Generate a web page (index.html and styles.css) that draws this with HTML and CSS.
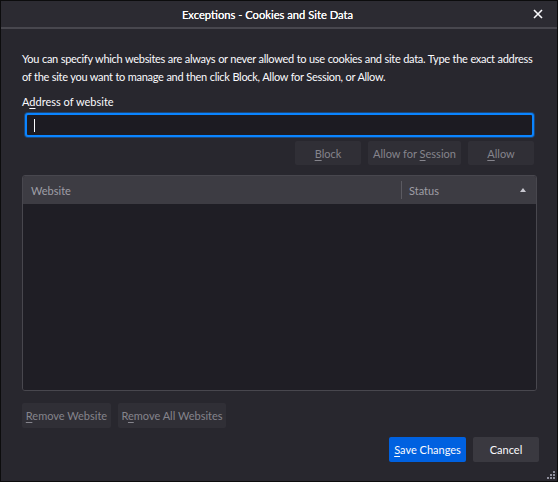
FILE: index.html
```html
<!DOCTYPE html>
<html lang="en">
<head>
  <meta charset="UTF-8">
  <meta name="viewport" content="width=device-width, initial-scale=1.0">
  <title>Exceptions - Cookies and Site Data</title>
  <link rel="stylesheet" href="styles.css">
</head>
<body>
  <div class="window">
    <div class="titlebar">
      <span class="title">Exceptions - Cookies and Site Data</span>
      <span class="close">
        <svg width="10" height="10" viewBox="0 0 10 10"><path d="M1 1L9 9M9 1L1 9" stroke="#fbfbfe" stroke-width="1.6"/></svg>
      </span>
    </div>

    <div class="content">
      <p class="intro">You can specify which websites are always or never allowed to use cookies and site data. Type the exact address of the site you want to manage and then click Block, Allow for Session, or Allow.</p>

      <label class="field-label">A<u>d</u>dress of website</label>
      <div class="address-input"><span class="caret"></span></div>

      <div class="action-row">
        <button class="btn" disabled><u>B</u>lock</button>
        <button class="btn" disabled>Allow for <u>S</u>ession</button>
        <button class="btn btn-allow" disabled><u>A</u>llow</button>
      </div>

      <div class="site-table">
        <div class="table-head">
          <div class="col col-site">Website</div>
          <div class="col col-status">Status <span class="sort-arrow"></span></div>
        </div>
        <div class="table-body"></div>
      </div>

      <div class="remove-row">
        <button class="btn" disabled><u>R</u>emove Website</button>
        <button class="btn" disabled>R<u>e</u>move All Websites</button>
      </div>

      <div class="footer">
        <button class="btn btn-primary"><u>S</u>ave Changes</button>
        <button class="btn btn-cancel">Cancel</button>
      </div>
    </div>

    <svg class="grip" width="8" height="8" viewBox="0 0 8 8">
      <rect x="6" y="0" width="2" height="2" fill="#8f8f9d"/>
      <rect x="3" y="3" width="2" height="2" fill="#8f8f9d"/>
      <rect x="6" y="3" width="2" height="2" fill="#8f8f9d"/>
      <rect x="0" y="6" width="2" height="2" fill="#8f8f9d"/>
      <rect x="3" y="6" width="2" height="2" fill="#8f8f9d"/>
      <rect x="6" y="6" width="2" height="2" fill="#8f8f9d"/>
    </svg>
  </div>
</body>
</html>
```

FILE: styles.css
```css
* {
  box-sizing: border-box;
}

body {
  margin: 0;
  background: #1c1b22;
  font-family: "Lato", "Noto Sans", sans-serif;
  font-size: 11px;
  color: #fbfbfe;
}

.window {
  position: relative;
  width: 558px;
  height: 482px;
  background: #2b2a33;
  border: 1px solid #0c0c0d;
  display: flex;
  flex-direction: column;
}

.titlebar {
  height: 28px;
  flex-shrink: 0;
  display: flex;
  align-items: center;
  justify-content: center;
  padding-right: 23px;
  border-bottom: 2px solid #48474e;
  background: #2c2b32;
}

.title {
  font-size: 11.2px;
  color: #ffffff;
  text-shadow: 0 0 0.2px #ffffff;
}

.close {
  position: absolute;
  right: 14px;
  top: 8px;
  display: flex;
}

.content {
  flex: 1;
  padding: 0 20px 0 21px;
  display: flex;
  flex-direction: column;
  background: #28272e;
}

.intro {
  margin: 21px -4px 0 0;
  line-height: 18px;
  letter-spacing: -0.3px;
  word-spacing: 0.3px;
}

u {
  text-decoration-thickness: 1px;
  text-underline-offset: 2px;
}

.field-label {
  margin-top: 8px;
  line-height: 16px;
}

.address-input {
  margin: 3px 3px 0 3px;
  height: 24px;
  flex-shrink: 0;
  border: 2px solid #0a84ff;
  border-radius: 3px;
  background: #1c1b22;
  box-shadow: 0 0 0 1px rgba(10, 132, 255, 0.35);
  display: flex;
  align-items: center;
  padding-left: 7px;
}

.caret {
  width: 1px;
  height: 13px;
  background: #fbfbfe;
}

.btn {
  font-family: inherit;
  font-size: 11px;
  height: 25px;
  flex-shrink: 0;
  border: none;
  border-radius: 2px;
  padding: 0;
  white-space: nowrap;
  background: #35343b;
  color: #fbfbfe;
}

.btn:disabled {
  color: #85848c;
  background: #302f36;
}

.action-row {
  margin-top: 4px;
  display: flex;
  justify-content: flex-end;
  gap: 7px;
  padding-right: 3px;
}

.action-row .btn {
  width: 66px;
  height: 24px;
}

.action-row .btn:nth-child(2) {
  width: 93px;
}

.site-table {
  margin-top: 10px;
  height: 216px;
  flex-shrink: 0;
  border: 1px solid #48474e;
  border-radius: 3px;
  display: flex;
  flex-direction: column;
  overflow: hidden;
}

.table-head {
  height: 28px;
  flex-shrink: 0;
  background: #3d3c43;
  display: flex;
  align-items: center;
  color: #9f9ea6;
}

.col {
  height: 100%;
  display: flex;
  align-items: center;
}

.col-site {
  width: 378px;
  padding-left: 8px;
}

.col-status {
  flex: 1;
  padding-left: 8px;
  padding-right: 10px;
  position: relative;
  justify-content: space-between;
}

.col-status::before {
  content: "";
  position: absolute;
  left: 0;
  top: 5px;
  bottom: 5px;
  width: 1px;
  background: #5b5a61;
}

.sort-arrow {
  width: 0;
  height: 0;
  border-left: 3.5px solid transparent;
  border-right: 3.5px solid transparent;
  border-bottom: 4px solid #c8c7cf;
}

.table-body {
  flex: 1;
  background: #1f1e25;
}

.remove-row {
  margin-top: 12px;
  display: flex;
  gap: 7px;
}

.remove-row .btn:first-child {
  width: 89px;
}

.remove-row .btn:last-child {
  width: 108px;
}

.footer {
  margin-top: 9px;
  display: flex;
  justify-content: flex-end;
  gap: 7px;
  margin-right: -2px;
}

.btn-primary {
  width: 77px;
  background: #0061e0;
}

.btn-cancel {
  width: 66px;
  background: #3a3940;
}

.grip {
  position: absolute;
  right: 2px;
  bottom: 2px;
}
```
